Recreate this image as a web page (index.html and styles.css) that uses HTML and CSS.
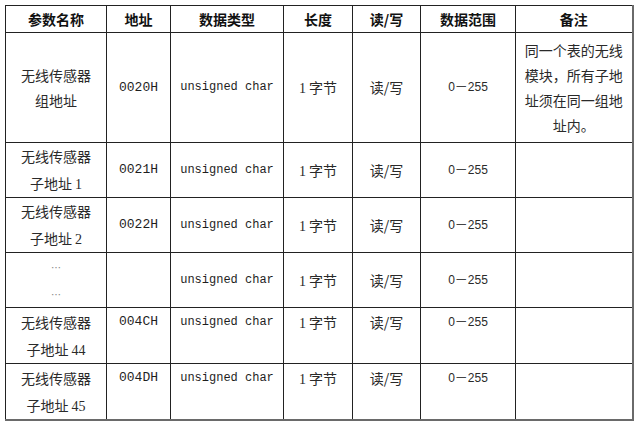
FILE: index.html
```html
<!DOCTYPE html>
<html lang="zh">
<head>
<meta charset="utf-8">
<title>参数表</title>
<link rel="stylesheet" href="styles.css">
</head>
<body>
<table class="params">
  <colgroup>
    <col class="c1"><col class="c2"><col class="c3"><col class="c4"><col class="c5"><col class="c6"><col class="c7">
  </colgroup>
  <thead>
    <tr class="head">
      <th>参数名称</th><th>地址</th><th>数据类型</th><th>长度</th><th>读/写</th><th>数据范围</th><th>备注</th>
    </tr>
  </thead>
  <tbody>
    <tr class="big">
      <td class="name">无线传感器<br>组地址</td>
      <td class="addr">0020H</td>
      <td class="type">unsigned char</td>
      <td><span class="num">1</span> 字节</td>
      <td>读/写</td>
      <td class="range">0<span class="dash">－</span>255</td>
      <td class="note">同一个表的无线<br>模块，所有子地<br>址须在同一组地<br>址内。</td>
    </tr>
    <tr class="row">
      <td class="name">无线传感器<br>子地址 <span class="num">1</span></td>
      <td class="addr">0021H</td>
      <td class="type">unsigned char</td>
      <td><span class="num">1</span> 字节</td>
      <td>读/写</td>
      <td class="range">0<span class="dash">－</span>255</td>
      <td></td>
    </tr>
    <tr class="row">
      <td class="name">无线传感器<br>子地址 <span class="num">2</span></td>
      <td class="addr">0022H</td>
      <td class="type">unsigned char</td>
      <td><span class="num">1</span> 字节</td>
      <td>读/写</td>
      <td class="range">0<span class="dash">－</span>255</td>
      <td></td>
    </tr>
    <tr class="row">
      <td class="name"><span class="dots">…</span><br><span class="dots">…</span></td>
      <td class="addr"></td>
      <td class="type">unsigned char</td>
      <td><span class="num">1</span> 字节</td>
      <td>读/写</td>
      <td class="range">0<span class="dash">－</span>255</td>
      <td></td>
    </tr>
    <tr class="row top">
      <td class="name">无线传感器<br>子地址 <span class="num">44</span></td>
      <td class="addr">004CH</td>
      <td class="type">unsigned char</td>
      <td><span class="num">1</span> 字节</td>
      <td>读/写</td>
      <td class="range">0<span class="dash">－</span>255</td>
      <td></td>
    </tr>
    <tr class="row top">
      <td class="name">无线传感器<br>子地址 <span class="num">45</span></td>
      <td class="addr">004DH</td>
      <td class="type">unsigned char</td>
      <td><span class="num">1</span> 字节</td>
      <td>读/写</td>
      <td class="range">0<span class="dash">－</span>255</td>
      <td></td>
    </tr>
  </tbody>
</table>
</body>
</html>
```
FILE: styles.css
```css
html, body {
  margin: 0;
  padding: 0;
  background: #ffffff;
}
body {
  padding: 5px 0 0 5px;
  font-family: "Noto Sans CJK SC", "Noto Sans", sans-serif;
  color: #2a2a2a;
}
.params {
  border-collapse: collapse;
  table-layout: fixed;
  width: 628px;
  border-right: 2px solid #6a6a6a;
  border-bottom: 2px solid #6a6a6a;
}
.c1 { width: 101px; }
.c2 { width: 64px; }
.c3 { width: 113px; }
.c4 { width: 69px; }
.c5 { width: 68px; }
.c6 { width: 95px; }
.c7 { width: 117px; }
.params th,
.params td {
  border: 1px solid #222222;
  padding: 0;
  text-align: center;
  vertical-align: middle;
  font-size: 14px;
  line-height: 26px;
  white-space: nowrap;
}
.params th {
  font-weight: bold;
  color: #111111;
  height: 26px;
  line-height: 26px;
}
.params .big td {
  height: 109px;
  line-height: 25px;
}
.params .row td {
  height: 54px;
}
.params .row td.name {
  line-height: 27px;
}
.params .top td {
  vertical-align: top;
  padding-top: 1px;
}
.params .top td.name {
  vertical-align: middle;
  padding-top: 0;
}
.params .addr {
  font-family: "Liberation Mono", monospace;
  font-size: 13px;
  color: #1e1e1e;
}
.params .type {
  font-family: "Liberation Mono", monospace;
  font-size: 12px;
  color: #1e1e1e;
}
.params .num {
  font-family: "Liberation Serif", serif;
  font-size: 14px;
  line-height: 1;
}
.params .range {
  font-family: "Liberation Sans", sans-serif;
  font-size: 12px;
}
.params .dash {
  font-family: "Noto Sans CJK SC", sans-serif;
  font-size: 13px;
  line-height: 1;
  color: #444444;
}
.params .dots {
  font-size: 10px;
  line-height: 1;
  color: #888888;
}
.params .note {
  line-height: 25px;
}
```
